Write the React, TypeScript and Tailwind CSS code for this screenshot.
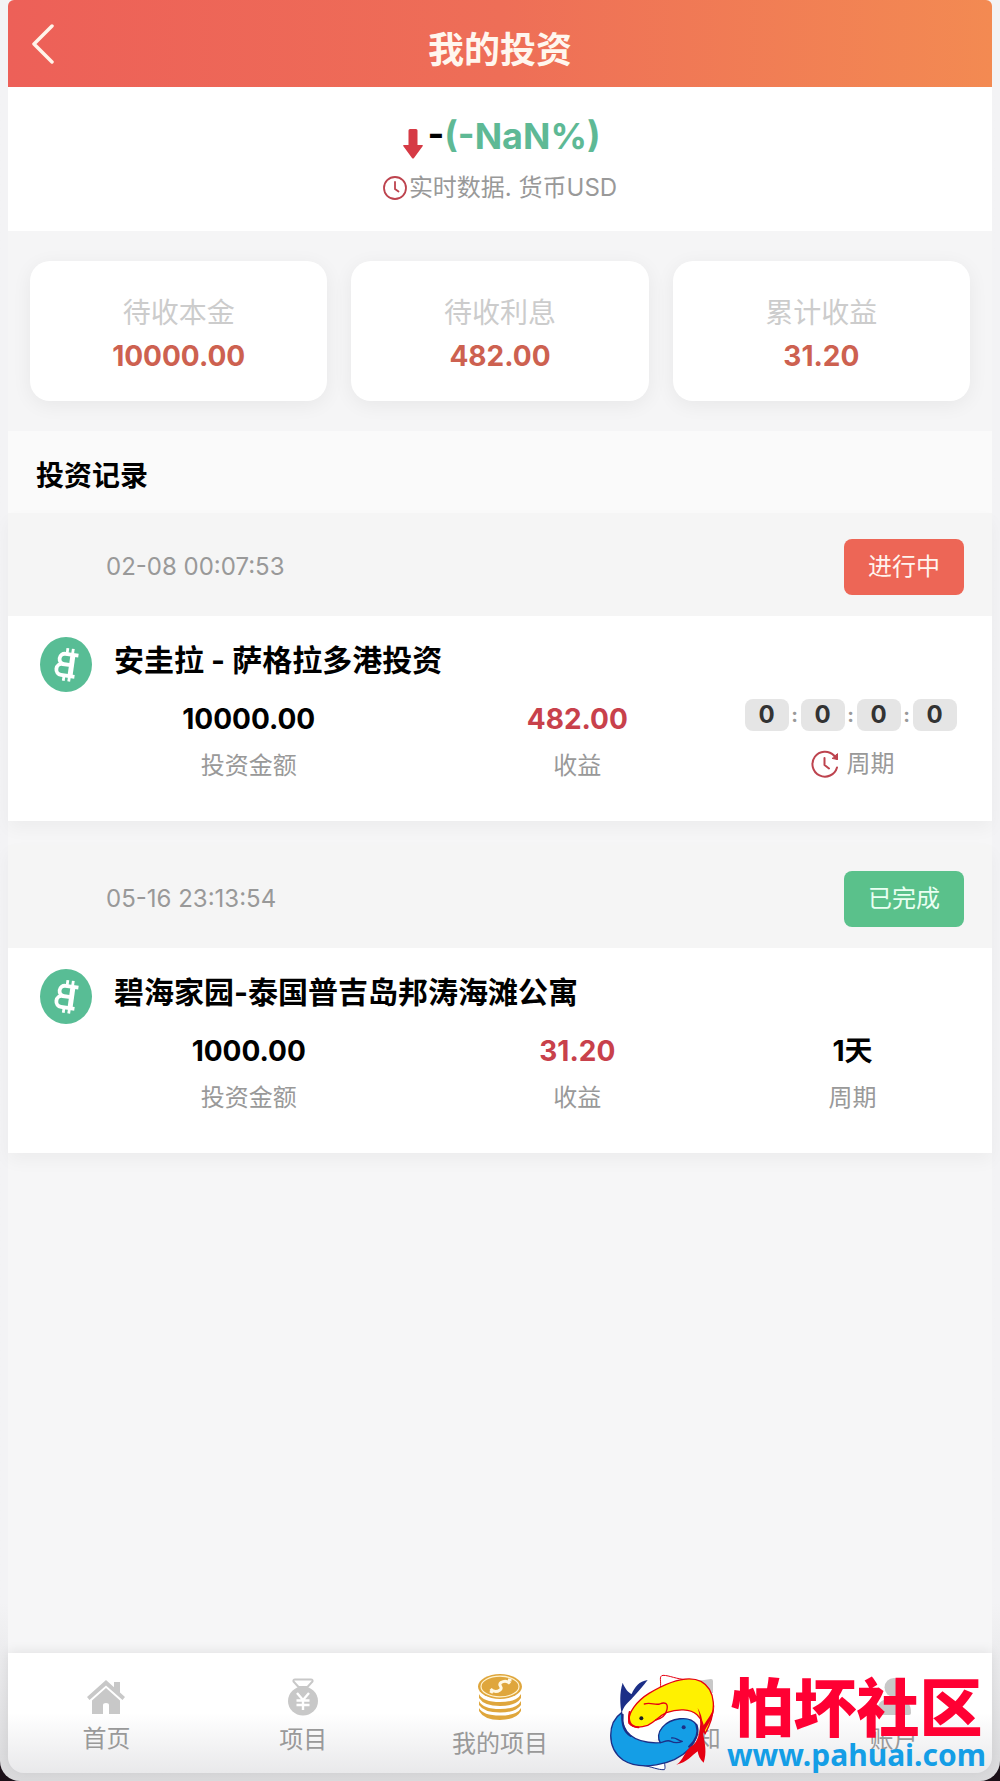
import type { ReactNode } from 'react';
import clsx from 'clsx';

interface InvestRecord {
  time: string;
  title: string;
  amount: string;
  profit: string;
  done: boolean;
  period?: string;
  countdown?: number[];
}

const stats = [
  { label: '待收本金', value: '10000.00' },
  { label: '待收利息', value: '482.00' },
  { label: '累计收益', value: '31.20' },
];

const records: InvestRecord[] = [
  {
    time: '02-08 00:07:53',
    title: '安圭拉 - 萨格拉多港投资',
    amount: '10000.00',
    profit: '482.00',
    done: false,
    countdown: [0, 0, 0, 0],
  },
  {
    time: '05-16 23:13:54',
    title: '碧海家园-泰国普吉岛邦涛海滩公寓',
    amount: '1000.00',
    profit: '31.20',
    done: true,
    period: '1天',
  },
];

function BackIcon() {
  return (
    <svg viewBox="0 0 22 40" className="w-[22px] h-10" fill="none" stroke="#fff4ea" strokeWidth="3.500" strokeLinecap="round" strokeLinejoin="round">
      <path d="M20 2 2 20l18 18" />
    </svg>
  );
}

function ArrowDownIcon() {
  return (
    <svg viewBox="0 0 20 30" className="w-5 h-[30px]" fill="#d63a45">
      <path d="M7 0h6q1.500 0 1.500 1.500V16H19q1.500 0 .6 1.300L11 29q-1 1.200-2 0L.4 17.300Q-.5 16 1 16h4.500V1.500Q5.500 0 7 0Z" />
    </svg>
  );
}

function ClockIcon() {
  return (
    <svg viewBox="0 0 24 24" className="w-6 h-6" fill="none" stroke="#bd434e" strokeWidth="1.800" strokeLinecap="round">
      <circle cx="12" cy="12" r="11" />
      <path d="M12 6v7l3.500 2.500" />
    </svg>
  );
}

function CycleIcon() {
  return (
    <svg viewBox="0 0 28 28" className="w-7 h-7" fill="none" stroke="#bd434e" strokeWidth="2" strokeLinecap="round" strokeLinejoin="round">
      <path d="M26 17.500A12.500 12.500 0 1 1 23 5.500L26 9" />
      <path d="M26.500 4v5.500l-5-1z" fill="#bd434e" strokeWidth="1" />
      <path d="M13.500 8v7l4.500 3.500" />
    </svg>
  );
}

function CoinIcon() {
  return (
    <svg viewBox="0 0 52 55" className="w-[52px] h-[55px] shrink-0">
      <ellipse cx="26" cy="27.500" rx="26" ry="27.500" fill="#58bd95" />
      <g transform="rotate(8 26 28)" fill="none" stroke="#fff">
        <path d="M37 17H24a5 5 0 0 0 0 10.500H31M31 27.500h-8.500a5.500 5.500 0 0 0 0 11H36" strokeWidth="3.800" />
        <path d="M31.500 17v21" strokeWidth="5" />
        <path d="M25.500 11v6M31 11v6M25.500 38v6M31 38v6" strokeWidth="2.800" />
      </g>
    </svg>
  );
}

function HomeIcon() {
  return (
    <svg viewBox="0 0 38 35" className="w-[38px] h-[35px]" fill="#c8c8c8">
      <path d="M19 0 0 17l2.500 3L19 5.500 35.500 20l2.500-3-5-4.500V2h-6v5.200Z" />
      <path d="M19 8 5 20.500V34h11V25q0-2 3-2t3 2v9h11V20.500Z" />
    </svg>
  );
}

function MoneyBagIcon() {
  return (
    <svg viewBox="0 0 30 38" className="w-[30px] h-[38px]">
      <path d="M10.500 9 5.500 3.500Q5 1.500 7 1.500h16q2 0 1.500 2L19.500 9Z" fill="none" stroke="#c8c8c8" strokeWidth="2" />
      <ellipse cx="15" cy="23" rx="15" ry="14.500" fill="#c8c8c8" />
      <path d="m9 15 6 7 6-7M15 22v10M8.500 22.500h13M8.500 27h13" fill="none" stroke="#fff" strokeWidth="2.400" />
    </svg>
  );
}

function CoinsIcon() {
  return (
    <svg viewBox="0 0 44 46" className="w-11 h-[46px]" fill="#dfa63c">
      <ellipse cx="22" cy="12.500" rx="22" ry="12.500" />
      <ellipse cx="22" cy="12.500" rx="19" ry="10.300" fill="none" stroke="#fff3cf" strokeWidth="1.200" />
      <path d="M1 20Q5 28 22 28t21-8v4Q38 32 22 32T1 24Z" />
      <path d="M1 27Q5 35 22 35t21-8v4Q38 38.500 22 38.500T1 31Z" />
      <path d="M1 34Q5 41.500 22 41.500T43 34v3Q38 46 22 46T1 37Z" />
      <path d="M32 9.500Q28 5.500 23 8.500c-4 3 3 4.500-1 7.500-3.500 2.500-7 1.500-9.500-1M30 6l3.500 0M12 17l3 1.500" fill="none" stroke="#fff8e4" strokeWidth="3" />
    </svg>
  );
}

function NoticeIcon() {
  return (
    <svg viewBox="0 0 36 36" className="w-9 h-9" fill="#c8c8c8">
      <path d="M4 4 32 0q2 0 2 2v12H14v4H4q-2 0-2-2V6q0-2 2-2Z" />
      <path d="M2 20h10v14H4q-2 0-2-2Z" />
    </svg>
  );
}

function AccountIcon() {
  return (
    <svg viewBox="0 0 34 38" className="w-[34px] h-[38px]" fill="#c8c8c8">
      <circle cx="17" cy="9.500" r="9.500" />
      <path d="M2 37q-2 0-2-2 0-14 12-14h10q12 0 12 14 0 2-2 2Z" />
    </svg>
  );
}

function FishLogo() {
  return (
    <svg viewBox="50 65 324 300" className="w-[108px] h-[100px] shrink-0" strokeLinejoin="round" strokeLinecap="round">
      {/* white band between both fish */}
      <path d="M150 100C90 150 70 230 110 262c30 20 70 10 100-5l120-45-10-50-110-20Z" fill="#fff" />
      {/* fins */}
      <path d="M204 108c4-18-6-34 8-36 20 0 40 12 72 13" fill="#fff" stroke="#e60012" strokeWidth="3" />
      <path d="M150 342c30 4 46 14 66 13 6-8-4-20 4-34" fill="#fff" stroke="#1c2f87" strokeWidth="3" />
      {/* blue fish */}
      <path
        d="M88 184C45 214 42 290 92 326c50 32 150 18 198-32 24-30 32-58 22-74-20-30-78-20-102 8-14 16-14 34-6 46-36 2-68-4-90-22-18-16-26-38-26-68Z"
        fill="#149ee6"
        stroke="#1c2f87"
        strokeWidth="4"
      />
      <path d="M91 94c-10 32-8 64-3 94 4-24 20-34 34-50 16-18 30-34 44-52-26 4-38 20-48 42-10-4-20-16-27-34Z" fill="#1c2f87" />
      <path d="M91 190c-4 36 8 54 24 64" fill="none" stroke="#1c2f87" strokeWidth="6" />
      <path d="M204 274c10 0 18-10 32-4 12 6 24 4 34 0-16-2-16-12-32-10" fill="#149ee6" stroke="#1c2f87" strokeWidth="4" />
      <path d="M312 220c10 30-4 50-22 66" fill="none" stroke="#1c2f87" strokeWidth="6" />
      {/* yellow fish */}
      <path
        d="M110 216c-6-30 24-68 60-90 50-30 114-56 156-36 44 24 50 90 12 158-4-22-8-44-24-58-20-18-58-18-92-6-24 12-32 26-56 38-24 8-44 8-56-6Z"
        fill="#fff100"
        stroke="#e60012"
        strokeWidth="4"
      />
      <path d="M156 158c20-6 30 4 46 0 14-6 26-4 22 16-4 20-16 26-34 32" fill="none" stroke="#e60012" strokeWidth="4" />
      <path d="M112 182c-6 26 0 44 26 46" fill="none" stroke="#e60012" strokeWidth="6" />
      <path d="M366 160c0 40-22 60-34 88 6 28 12 56 2 86-12-10-16-22-18-34-18 12-32 34-64 40 22-12 24-46 52-60 20-20 26-70 12-110 8 12 14 30 16 54 14-22 30-40 34-64Z" fill="#e60012" />
      <circle cx="147" cy="201" r="6" fill="#1b2024" />
      <circle cx="274" cy="228" r="6" fill="#1c2f87" />
    </svg>
  );
}

function Countdown({ parts }: { parts: number[] }) {
  return (
    <div className="flex items-center justify-center h-8 pr-1">
      {parts.map((n, i) => (
        <div key={i} className="flex items-center">
          {i > 0 && <span className="w-3 text-center text-xl leading-8 font-bold text-[#999]">:</span>}
          <span className="w-11 h-8 rounded-lg bg-[#e5e5e5] text-center text-2xl leading-8 font-bold text-[#333]">{n}</span>
        </div>
      ))}
    </div>
  );
}

function RecordCard({ record }: { record: InvestRecord }) {
  return (
    <article className="mb-6 shadow-[0_8px_16px_rgba(0,0,0,0.04)]">
      <div className="h-[103px] pt-1 pl-[98px] pr-7 flex items-center justify-between bg-[#f5f5f5]">
        <time className="text-2xl text-[#999]">{record.time}</time>
        <button
          className={clsx(
            'w-[120px] h-14 rounded-lg text-2xl',
            record.done ? 'bg-[#5ac18b] text-[#e9fff2]' : 'bg-[#ed6656] text-[#fff4ee]',
          )}
        >
          {record.done ? '已完成' : '进行中'}
        </button>
      </div>
      <div className="bg-white pt-[21px] pb-[38px]">
        <div className="flex gap-[22px] pl-8 h-[62px]">
          <CoinIcon />
          <h3 className="text-[30px] leading-[46px] font-bold text-black">{record.title}</h3>
        </div>
        <div className="grid grid-cols-[19fr_18fr_13fr] pl-[72px] pr-6 text-center">
          <div>
            <div className="text-[28px] leading-10 font-bold text-black">{record.amount}</div>
            <div className="pt-[10px] text-2xl leading-[34px] text-[#999]">投资金额</div>
          </div>
          <div>
            <div className="text-[28px] leading-10 font-bold text-[#c8414b]">{record.profit}</div>
            <div className="pt-[10px] text-2xl leading-[34px] text-[#999]">收益</div>
          </div>
          {record.countdown ? (
            <div>
              <Countdown parts={record.countdown} />
              <div className="flex items-center justify-center gap-2 pt-4 text-2xl leading-[34px] text-[#999]">
                <CycleIcon />
                周期
              </div>
            </div>
          ) : (
            <div>
              <div className="text-[28px] leading-10 font-bold text-black">{record.period}</div>
              <div className="pt-[10px] text-2xl leading-[34px] text-[#999]">周期</div>
            </div>
          )}
        </div>
      </div>
    </article>
  );
}

function TabItem({ icon, label }: { icon: ReactNode; label: string }) {
  return (
    <a href="#" className="flex-1 flex flex-col items-center justify-center pt-2 text-2xl leading-8 text-[#999]">
      {icon}
      <span className="pt-2">{label}</span>
    </a>
  );
}

export default function App() {
  return (
    <div className="min-h-screen flex bg-[#1b1018] font-[Inter,'Noto_Sans_CJK_SC',sans-serif]">
      <div className="relative flex-1 flex flex-col px-2 pb-2 rounded-b-[20px] overflow-hidden bg-linear-to-b from-[#f3f3f5] from-90% to-[#d9d9db]">
        <header className="grid grid-cols-[1fr_auto_1fr] items-center h-[87px] px-6 rounded-t-md bg-linear-to-r from-[#ed6058] via-[#ee6e57] to-[#f38a52]">
          <button aria-label="返回" className="justify-self-start">
            <BackIcon />
          </button>
          <h1 className="pt-3 text-4xl font-bold text-[#fff6ee]">我的投资</h1>
        </header>

        <main className="flex-1 flex flex-col bg-[#f6f6f7]">
          <section className="h-36 pt-6 bg-white">
            <div className="flex justify-center items-center gap-1 pl-1 text-4xl leading-[50px] font-bold">
              <span className="pt-4">
                <ArrowDownIcon />
              </span>
              <p>
                <span className="text-black">-</span>
                <span className="text-[#5eb995]">(-NaN%)</span>
              </p>
            </div>
            <div className="flex justify-center items-center gap-[2px] text-2xl leading-[54px] text-[#999]">
              <ClockIcon />
              实时数据. 货币USD
            </div>
          </section>

          <section className="grid grid-cols-3 gap-6 px-[22px] py-[30px] bg-[#f5f5f6]">
            {stats.map((s) => (
              <div key={s.label} className="h-[140px] pt-[30px] rounded-[20px] bg-white text-center shadow-[0_4px_20px_rgba(0,0,0,0.06)]">
                <div className="text-[28px] leading-[44px] text-[#ccc]">{s.label}</div>
                <div className="text-[28px] leading-[42px] font-bold text-[#cd6150]">{s.value}</div>
              </div>
            ))}
          </section>

          <h2 className="h-[82px] pt-2 px-7 text-[28px] leading-[74px] font-bold text-black bg-[#fafafa]">投资记录</h2>

          {records.map((r) => (
            <RecordCard key={r.time} record={r} />
          ))}
        </main>

        <nav className="relative h-[120px] flex rounded-b-2xl bg-linear-to-b from-white from-50% to-[#e9e9eb] shadow-[0_-2px_12px_rgba(0,0,0,0.08)]">
          <TabItem icon={<HomeIcon />} label="首页" />
          <TabItem icon={<MoneyBagIcon />} label="项目" />
          <TabItem icon={<CoinsIcon />} label="我的项目" />
          <TabItem icon={<NoticeIcon />} label="通知" />
          <TabItem icon={<AccountIcon />} label="账户" />
        </nav>

        {/* community watermark over the tab bar */}
        <div className="absolute right-[14px] bottom-2 flex items-center gap-[10px] pointer-events-none">
          <FishLogo />
          <div className="font-['Noto_Sans','Noto_Sans_CJK_SC',sans-serif] text-center font-bold whitespace-nowrap">
            <div className="text-[63px] leading-[64px] font-black text-[#ff0033]">怕坏社区</div>
            <div className="text-3xl leading-8 text-[#149ee6]">www.pahuai.com</div>
          </div>
        </div>
      </div>
    </div>
  );
}
